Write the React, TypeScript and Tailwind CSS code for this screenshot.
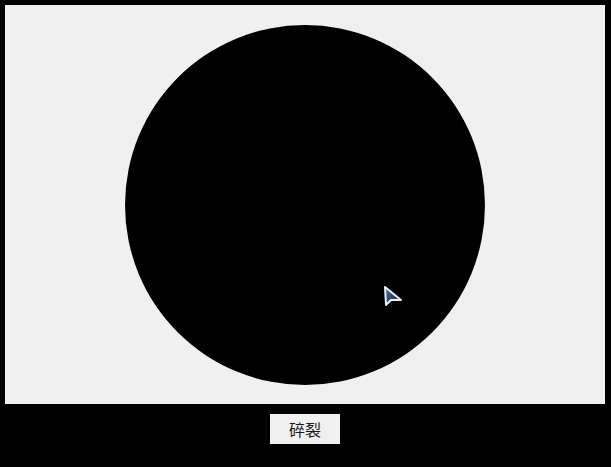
export default function App() {
  return (
    <div className="w-[611px] h-[467px] bg-black pt-[5px] pl-[5px]" style={{ fontFamily: '"Noto Sans CJK SC", "Liberation Sans", sans-serif' }}>
      <div className="w-[600px] flex flex-col items-center">
        <div className="relative w-[600px] h-[399px] bg-[#f0f0f0] flex items-center justify-center">
          <div className="w-[360px] h-[360px] rounded-full bg-black" />
          {/* mouse pointer over the canvas */}
          <svg className="absolute left-[374px] top-[276px]" width="24" height="28" viewBox="0 0 24 28">
            <defs>
              <linearGradient id="ptr" x1="0" y1="0" x2="1" y2="1">
                <stop offset="0" stopColor="#4a7098" />
                <stop offset="1" stopColor="#0d2238" />
              </linearGradient>
            </defs>
            <path d="M6 6 L7 24 L12 19 L22 19 Z" fill="url(#ptr)" stroke="#e4f3ff" strokeWidth="2" strokeLinejoin="round" />
          </svg>
        </div>
        <button className="mt-[10px] w-[70px] h-[30px] bg-[#f0f0f0] text-[#1a1a1a] text-[16px] leading-none flex items-center justify-center">
          碎裂
        </button>
      </div>
    </div>
  )
}
